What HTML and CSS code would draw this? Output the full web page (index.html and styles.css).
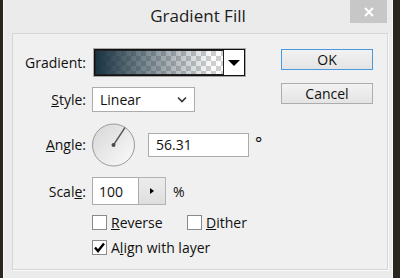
FILE: index.html
```html
<!DOCTYPE html>
<html lang="en">
<head>
  <meta charset="UTF-8">
  <title>Gradient Fill</title>
  <link rel="stylesheet" href="styles.css">
</head>
<body>
  <div class="dialog">
    <div class="titlebar">
      <span></span>
      <div class="title">Gradient Fill</div>
      <button class="close-button">
        <svg width="12" height="12" viewBox="0 0 12 12"><path d="M2 2 L10 10 M10 2 L2 10" stroke="#fff" stroke-width="2"/></svg>
      </button>
    </div>
    <div class="panel">
      <div class="form">
        <div class="label">Gradient:</div>
        <div class="gradient-picker">
          <div class="gradient-inner">
            <div class="swatch"></div>
            <div class="picker-arrow"><span class="down-triangle"></span></div>
          </div>
        </div>

        <div class="label"><u>S</u>tyle:</div>
        <div class="select">
          <span>Linear</span>
          <svg width="10" height="7" viewBox="0 0 10 7"><polyline points="1,1.5 5,5.5 9,1.5" fill="none" stroke="#333" stroke-width="1.6"/></svg>
        </div>

        <div class="label"><u>A</u>ngle:</div>
        <div class="angle-row">
          <svg class="dial" width="44" height="46" viewBox="0 0 44 46">
            <defs>
              <linearGradient id="dialFill" x1="0" y1="0" x2="1" y2="1">
                <stop offset="0" stop-color="#d6d6d6"/>
                <stop offset="1" stop-color="#fbfbfb"/>
              </linearGradient>
            </defs>
            <circle cx="21.5" cy="23" r="21" fill="url(#dialFill)" stroke="#9a9a9a"/>
            <line x1="21.5" y1="23" x2="33" y2="5.5" stroke="#5a5a5a" stroke-width="1.4"/>
            <circle cx="21.5" cy="23" r="2" fill="#4a4a4a"/>
          </svg>
          <div class="text-input angle-input">56.31</div>
          <span class="unit degree">°</span>
        </div>

        <div class="label">Scal<u>e</u>:</div>
        <div class="scale-row">
          <div class="text-input scale-input">100</div>
          <div class="stepper"><span class="right-triangle"></span></div>
          <span class="unit">%</span>
        </div>

        <div class="checks">
          <label class="check reverse"><span class="box"></span><span><u>R</u>everse</span></label>
          <label class="check"><span class="box"></span><span><u>D</u>ither</span></label>
        </div>
        <div class="checks">
          <label class="check"><span class="box checked">
            <svg width="13" height="13" viewBox="0 0 13 13"><path d="M2 6.5 L5 10 L11 2.5" fill="none" stroke="#000" stroke-width="2.4"/></svg>
          </span><span>A<u>l</u>ign with layer</span></label>
        </div>
      </div>

      <div class="buttons">
        <button class="button default">OK</button>
        <button class="button">Cancel</button>
      </div>
    </div>
  </div>
</body>
</html>
```

FILE: styles.css
```css
body {
  margin: 0;
  padding: 0;
  background-color: #2b2520;
  font-family: 'Open Sans', 'Liberation Sans', sans-serif;
  font-size: 14px;
  color: #111;
  height: 278px;
  overflow: hidden;
}

.dialog {
  margin-left: 3px;
  width: 388px;
  height: 278px;
  background: #ebebeb;
  border-left: 1px solid #f7f7f7;
  border-right: 1px solid #f7f7f7;
  display: flex;
  flex-direction: column;
}

.titlebar {
  display: grid;
  grid-template-columns: 1fr auto 1fr;
  height: 33px;
}

.title {
  font-size: 17px;
  color: #1c1c1c;
  line-height: 31px;
}

.close-button {
  justify-self: end;
  width: 37px;
  height: 23px;
  margin-right: 5px;
  padding: 0;
  border: none;
  background: #c7c7c7;
  display: flex;
  justify-content: center;
  align-items: center;
}

.panel {
  margin-left: 8px;
  margin-right: 4px;
  height: 235px;
  background: #f0f0f0;
  border: 1px solid #d6d6d6;
  box-shadow: 1px 1px 0 #fafafa;
  display: flex;
}

.form {
  padding-top: 14px;
  display: grid;
  grid-template-columns: 73px auto;
  grid-template-rows: 29px 25px 45px 28px 15px 15px;
  column-gap: 6px;
  row-gap: 10px;
  align-content: start;
}

.label {
  justify-self: end;
  align-self: center;
  white-space: nowrap;
}

u {
  text-underline-offset: 1px;
}

/* gradient swatch */
.gradient-picker {
  width: 151px;
  margin-left: 1px;
  border: 1px solid #a8a8a8;
  display: flex;
}

.gradient-inner {
  flex: 1;
  border: 1px solid #111;
  display: flex;
}

.swatch {
  flex: 1;
  border: 1px solid #222;
  background:
    linear-gradient(to right, rgba(26, 52, 66, 1), rgba(26, 52, 66, 0) 92%),
    repeating-conic-gradient(#cfcfcf 0 25%, #fdfdfd 0 50%) 0 0 / 10px 10px;
}

.picker-arrow {
  width: 20px;
  background: #fff;
  display: flex;
  justify-content: center;
  align-items: center;
}

.down-triangle {
  width: 0;
  height: 0;
  border-left: 6px solid transparent;
  border-right: 6px solid transparent;
  border-top: 6px solid #000;
}

/* style select */
.select {
  width: 103px;
  border: 1px solid #acacac;
  background: #fff;
  display: flex;
  justify-content: space-between;
  align-items: center;
  padding: 0 7px 0 7px;
  box-sizing: border-box;
}

/* angle */
.angle-row {
  display: flex;
  align-items: center;
}

.dial {
  display: block;
}

.text-input {
  background: #fff;
  border: 1px solid #acacac;
  box-sizing: border-box;
  display: flex;
  align-items: center;
}

.angle-input {
  margin-left: 12px;
  width: 101px;
  height: 24px;
  padding-left: 7px;
}

.unit {
  margin-left: 7px;
}

.degree {
  align-self: flex-start;
  margin-left: 6px;
  margin-top: 12px;
  font-size: 17px;
  line-height: 17px;
}

/* scale */
.scale-row {
  display: flex;
  align-items: center;
}

.scale-input {
  width: 47px;
  height: 28px;
  padding-left: 6px;
}

.stepper {
  width: 27px;
  height: 28px;
  box-sizing: border-box;
  border: 1px solid #b4b4b4;
  border-left: none;
  background: linear-gradient(#ececec, #dedede);
  display: flex;
  justify-content: center;
  align-items: center;
}

.right-triangle {
  width: 0;
  height: 0;
  border-top: 3px solid transparent;
  border-bottom: 3px solid transparent;
  border-left: 4px solid #000;
}

/* checkboxes */
.checks {
  grid-column: 2;
  display: flex;
  align-items: center;
}

.check {
  display: flex;
  align-items: center;
  gap: 4px;
}

.reverse {
  width: 95px;
}

.box {
  width: 15px;
  height: 15px;
  box-sizing: border-box;
  border: 1px solid #8a8a8a;
  background: #fff;
  display: flex;
  justify-content: center;
  align-items: center;
}

/* buttons */
.buttons {
  margin-left: auto;
  margin-right: 14px;
  padding-top: 15px;
  display: flex;
  flex-direction: column;
  gap: 13px;
}

.button {
  width: 92px;
  height: 21px;
  padding: 0;
  font-family: inherit;
  font-size: 14px;
  color: #111;
  border: 1px solid #adadad;
  background: linear-gradient(#f2f2f2, #e4e4e4);
}

.button.default {
  border-color: #4a98e0;
}
```
